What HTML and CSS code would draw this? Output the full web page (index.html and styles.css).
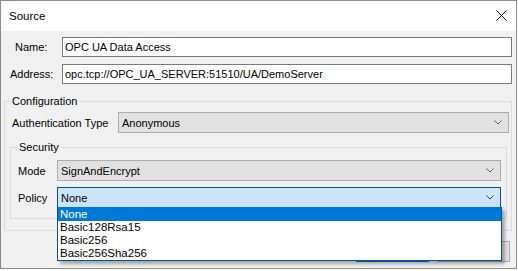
FILE: index.html
```html
<!DOCTYPE html>
<html lang="en">
<head>
    <meta charset="UTF-8">
    <meta name="viewport" content="width=device-width, initial-scale=1.0">
    <title>Source</title>
    <link rel="stylesheet" href="styles.css">
</head>
<body>
<div class="window">
    <div class="titlebar">
        <span class="title">Source</span>
        <svg class="close" width="11" height="11" viewBox="0 0 11 11">
            <path d="M0.5 0.5 L10.5 10.5 M10.5 0.5 L0.5 10.5" stroke="#000" stroke-width="1" fill="none"/>
        </svg>
    </div>

    <div class="content">
        <div class="field">
            <label class="label-name">Name:</label>
            <div class="textbox">OPC UA Data Access</div>
        </div>
        <div class="field">
            <label class="label-address">Address:</label>
            <div class="textbox">opc.tcp://OPC_UA_SERVER:51510/UA/DemoServer</div>
        </div>

        <!-- 設定グループ -->
        <fieldset class="group config">
            <legend>Configuration</legend>
            <div class="row auth-row">
                <label class="auth-label">Authentication Type</label>
                <div class="combo">
                    <span>Anonymous</span>
                    <svg class="chevron" width="8" height="5" viewBox="0 0 8 5"><polyline points="0.5,0.5 4,4 7.5,0.5" fill="none" stroke="#606060"/></svg>
                </div>
            </div>

            <fieldset class="group security">
                <legend>Security</legend>
                <div class="row">
                    <label class="sec-label">Mode</label>
                    <div class="combo">
                        <span>SignAndEncrypt</span>
                        <svg class="chevron" width="8" height="5" viewBox="0 0 8 5"><polyline points="0.5,0.5 4,4 7.5,0.5" fill="none" stroke="#606060"/></svg>
                    </div>
                </div>
                <div class="row policy-row">
                    <label class="sec-label">Policy</label>
                    <div class="combo focused">
                        <span>None</span>
                        <svg class="chevron" width="8" height="5" viewBox="0 0 8 5"><polyline points="0.5,0.5 4,4 7.5,0.5" fill="none" stroke="#404040"/></svg>
                        <!-- 開いたドロップダウン -->
                        <ul class="dropdown">
                            <li class="selected">None</li>
                            <li>Basic128Rsa15</li>
                            <li>Basic256</li>
                            <li>Basic256Sha256</li>
                        </ul>
                    </div>
                </div>
            </fieldset>
        </fieldset>

        <div class="buttons">
            <button class="default">OK</button>
            <button>Cancel</button>
        </div>
    </div>
</div>
</body>
</html>
```

FILE: styles.css
```css
* {
    box-sizing: border-box;
}
body {
    margin: 0;
    background-color: #ffffff;
    font-family: "Liberation Sans", Arial, sans-serif;
    font-size: 11px;
    color: #000;
}
.window {
    width: 517px;
    height: 269px;
    border: 1px solid #8a8a8a;
    background-color: #f0f0f0;
    overflow: hidden;
}
.titlebar {
    height: 30px;
    background-color: #ffffff;
    display: flex;
    align-items: center;
    justify-content: space-between;
    padding: 0 9px 0 8px;
}
.title {
    font-size: 11.5px;
    margin-top: -1px;
}
.close {
    margin-top: -1px;
}
.content {
    padding: 6px 2px 0 3px;
}
.field {
    display: flex;
    align-items: center;
    height: 20px;
    margin-right: 2px;
    margin-bottom: 7px;
}
.field label {
    width: 58px;
}
.label-name {
    padding-left: 11px;
}
.label-address {
    padding-left: 6px;
}
.textbox {
    flex: 1;
    height: 20px;
    line-height: 18px;
    background-color: #fff;
    border: 1px solid #7a7a7a;
    padding-left: 2px;
    white-space: nowrap;
}
/* グループボックス */
.group {
    margin: 0;
    border: 1px solid #dcdcdc;
    min-width: 0;
}
.group legend {
    padding: 0 2px;
    line-height: 13px;
}
.config {
    margin-top: 11px; /* 上のフィールドのmargin-bottomと相殺される */
    margin-right: 2px;
    padding: 4px 3px 11px 5px;
}
.security {
    margin-top: 8px;
    margin-right: 1px;
    padding: 6px 5px 10px 6px;
}
.row {
    display: flex;
    align-items: center;
    height: 21px;
}
.auth-row {
    margin-right: -1px;
}
.auth-label {
    width: 108px;
    padding-left: 2px;
}
.sec-label {
    width: 40px;
    padding-left: 1px;
}
.policy-row {
    margin-top: 6px;
}
.combo {
    position: relative;
    flex: 1;
    height: 21px;
    display: flex;
    align-items: center;
    justify-content: space-between;
    background-color: #e1e1e1;
    border: 1px solid #adadad;
    padding: 0 6px 0 3px;
}
.combo.focused {
    background-color: #cce4f7;
    border-color: #005499;
}
.dropdown {
    position: absolute;
    top: 100%;
    left: -1px;
    right: -2px;
    margin: 0;
    padding: 0;
    list-style: none;
    background-color: #fff;
    border: 1px solid #005499;
    border-top: none;
    box-shadow: 3px 3px 3px rgba(0, 0, 0, 0.3);
    z-index: 1;
}
.dropdown li {
    height: 13px;
    line-height: 13px;
    padding-left: 2px;
    font-size: 11.5px;
}
.dropdown li.selected {
    height: 14px;
    line-height: 14px;
    background-color: #0078d7;
    color: #fff;
}
.buttons {
    display: flex;
    justify-content: flex-end;
    gap: 8px;
    margin-top: 10px;
    margin-right: 4px;
}
button {
    width: 73px;
    height: 21px;
    font-family: inherit;
    font-size: 11px;
    background-color: #e1e1e1;
    border: 1px solid #adadad;
}
button.default {
    border-color: #0078d7;
}
```
